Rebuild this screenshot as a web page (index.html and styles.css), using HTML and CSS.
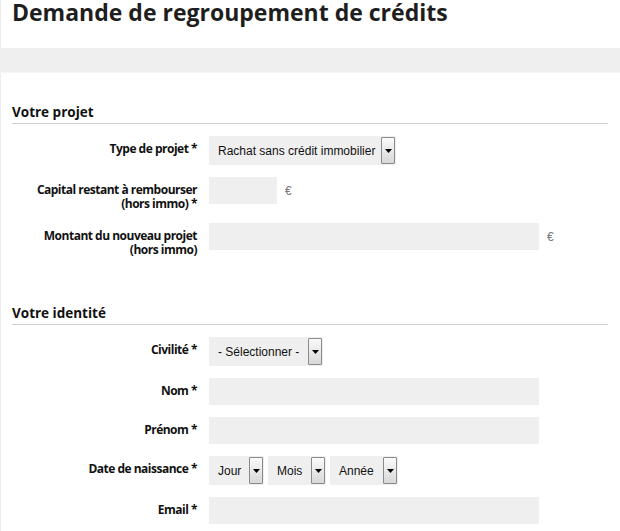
FILE: index.html
```html
<!DOCTYPE html>
<html lang="fr">
<head>
<meta charset="utf-8">
<title>Demande de regroupement de crédits</title>
<link rel="stylesheet" href="styles.css">
</head>
<body>
<div class="page">
  <h1 class="title">Demande de regroupement de crédits</h1>
  <div class="band"></div>

  <section class="section">
    <h2 class="section-title">Votre projet</h2>
    <div class="form">
      <div class="label">Type de projet *</div>
      <div class="field">
        <div class="select select-type"><span class="value">Rachat sans crédit immobilier</span><span class="arrow"><svg width="7" height="4" viewBox="0 0 7 4"><path d="M0 0H7L3.5 4Z" fill="#000"/></svg></span></div>
      </div>

      <div class="label">Capital restant à rembourser<br>(hors immo) *</div>
      <div class="field">
        <div class="input input-small"></div><span class="unit">€</span>
      </div>

      <div class="label">Montant du nouveau projet<br>(hors immo)</div>
      <div class="field">
        <div class="input input-wide"></div><span class="unit">€</span>
      </div>
    </div>
  </section>

  <section class="section section-second">
    <h2 class="section-title">Votre identité</h2>
    <div class="form">
      <div class="label">Civilité *</div>
      <div class="field">
        <div class="select select-civ"><span class="value">- Sélectionner -</span><span class="arrow"><svg width="7" height="4" viewBox="0 0 7 4"><path d="M0 0H7L3.5 4Z" fill="#000"/></svg></span></div>
      </div>

      <div class="label">Nom *</div>
      <div class="field"><div class="input input-wide"></div></div>

      <div class="label">Prénom *</div>
      <div class="field"><div class="input input-wide"></div></div>

      <div class="label">Date de naissance *</div>
      <div class="field date">
        <div class="select select-day"><span class="value">Jour</span><span class="arrow"><svg width="7" height="4" viewBox="0 0 7 4"><path d="M0 0H7L3.5 4Z" fill="#000"/></svg></span></div>
        <div class="select select-month"><span class="value">Mois</span><span class="arrow"><svg width="7" height="4" viewBox="0 0 7 4"><path d="M0 0H7L3.5 4Z" fill="#000"/></svg></span></div>
        <div class="select select-year"><span class="value">Année</span><span class="arrow"><svg width="7" height="4" viewBox="0 0 7 4"><path d="M0 0H7L3.5 4Z" fill="#000"/></svg></span></div>
      </div>

      <div class="label">Email *</div>
      <div class="field"><div class="input input-wide"></div></div>
    </div>
  </section>
</div>
</body>
</html>
```

FILE: styles.css
```css
* { box-sizing: border-box; }

html, body {
  margin: 0;
  padding: 0;
  background: #fff;
}

body {
  font-family: "Open Sans", "DejaVu Sans", sans-serif;
  color: #1a1a1a;
}

.page {
  border-left: 1px solid #ececec;
  min-height: 531px;
}

.title {
  margin: 0;
  padding: 0 0 0 11px;
  height: 48px;
  font-size: 23px;
  font-weight: 700;
  line-height: 24px;
  letter-spacing: 0;
  color: #1e1e1e;
}

.band {
  height: 25px;
  margin-left: -1px;
  background: #efefef;
  border-bottom: 1px solid #f6f6f6;
}

.section {
  padding: 31px 12px 0 11px;
}

.section-second {
  padding-top: 48px;
}

.section-title {
  margin: 0 0 12px 0;
  padding: 0 0 3px 0;
  font-size: 13.5px;
  font-weight: 700;
  line-height: 16px;
  color: #111;
  border-bottom: 1px solid #cfcfcf;
}

.form {
  display: grid;
  grid-template-columns: 185px 1fr;
  column-gap: 12px;
  row-gap: 12px;
  align-items: start;
}

.label {
  text-align: right;
  font-size: 12px;
  font-weight: 700;
  line-height: 14px;
  letter-spacing: -0.5px;
  padding-top: 6px;
  color: #111;
}

.field {
  display: flex;
  align-items: center;
}

.input {
  height: 27px;
  background: #efefef;
}

.input-small { width: 68px; }
.input-wide { width: 330px; }

.unit {
  font-family: "Liberation Sans", Arial, sans-serif;
  font-size: 12px;
  color: #777;
  margin-left: 8px;
}

.select {
  display: flex;
  align-items: center;
  height: 29px;
  background: #efefef;
  padding: 1px 1px 1px 9px;
  font-family: "Liberation Sans", Arial, sans-serif;
  font-size: 12px;
  color: #111;
}

.select .value {
  white-space: nowrap;
}

.select .arrow {
  display: flex;
  align-items: center;
  justify-content: center;
  margin-left: auto;
  width: 14px;
  height: 27px;
  border: 1px solid #8a8a8a;
  border-radius: 1px;
  background: linear-gradient(#fafafa, #d8d8d8);
}

.select-type { width: 187px; }
.select-civ { width: 114px; }
.select-day { width: 55px; }
.select-month { width: 58px; }
.select-year { width: 68px; }

.date {
  gap: 4px;
}
```
